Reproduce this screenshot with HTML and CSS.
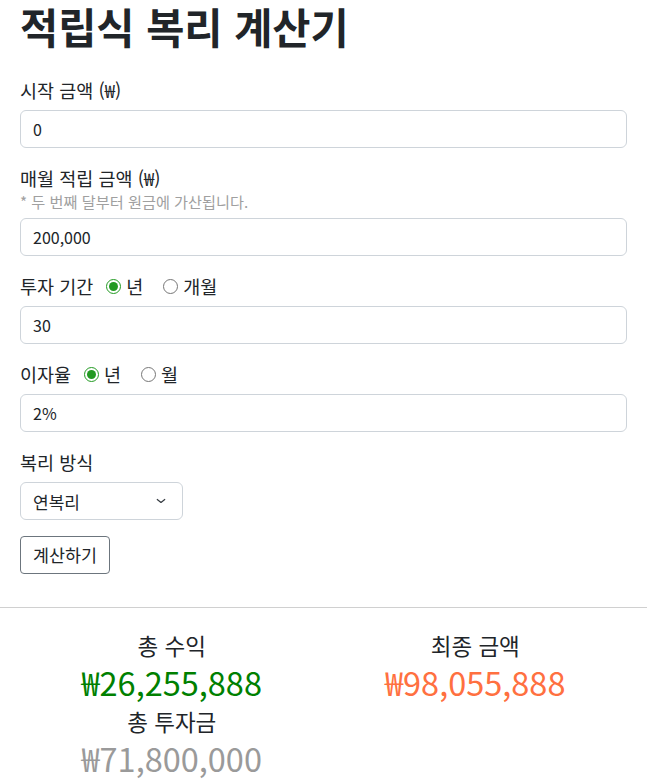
FILE: index.html
```html
<!DOCTYPE html>
<html lang="ko">
<head>
  <meta charset="UTF-8">
  <title>적립식 복리 계산기</title>
  <link rel="stylesheet" href="styles.css">
</head>
<body>
  <div class="container">
    <h1>적립식 복리 계산기</h1>
    <form id="calcForm">
      <div class="group">
        <label class="label" for="start">시작 금액 (₩)</label>
        <input type="text" id="start" class="field" value="0" />
      </div>

      <div class="group">
        <label class="label tight" for="monthly">매월 적립 금액 (₩)</label>
        <div class="hint">* 두 번째 달부터 원금에 가산됩니다.</div>
        <input type="text" id="monthly" class="field" value="200,000" />
      </div>

      <div class="group">
        <div class="label row">
          <span>투자 기간</span>
          <label class="opt"><input type="radio" name="period" checked />년</label>
          <label class="opt"><input type="radio" name="period" />개월</label>
        </div>
        <input type="text" id="period" class="field" value="30" />
      </div>

      <div class="group">
        <div class="label row">
          <span>이자율</span>
          <label class="opt"><input type="radio" name="rate" checked />년</label>
          <label class="opt"><input type="radio" name="rate" />월</label>
        </div>
        <input type="text" id="rate" class="field" value="2%" />
      </div>

      <div class="group">
        <label class="label" for="type">복리 방식</label>
        <select id="type" class="select">
          <option>연복리</option>
          <option>월복리</option>
        </select>
      </div>

      <button type="submit" class="btn">계산하기</button>
    </form>
  </div>

  <hr class="divider" />

  <div class="results">
    <div class="col">
      <div class="res-label">총 수익</div>
      <div class="res-value profit">₩26,255,888</div>
      <div class="res-label">총 투자금</div>
      <div class="res-value invested">₩71,800,000</div>
    </div>
    <div class="col">
      <div class="res-label">최종 금액</div>
      <div class="res-value final">₩98,055,888</div>
    </div>
  </div>
</body>
</html>
```

FILE: styles.css
```css
body { margin: 0; font-family: "Noto Sans CJK KR", "Noto Sans", sans-serif; color: #212529; background: #fff; font-size: 16px; line-height: 1.5; }
.container { padding: 0 20px; }
h1 { font-size: 41.5px; font-weight: 700; line-height: 49px; margin: 0 0 26px; padding-top: 2px; }
.group { margin-bottom: 17px; }
.label { display: block; font-size: 18.5px; line-height: 26px; margin-bottom: 7px; }
.label.tight { margin-bottom: 0; }
.row { display: flex; align-items: center; }
.row span { margin-right: 13px; }
.opt { display: flex; align-items: center; margin-right: 20px; }
.opt input { margin: 0 5px 0 0; width: 15px; height: 15px; accent-color: #229a22; }
.hint { font-size: 15.2px; line-height: 20px; color: #a0a0a0; margin-bottom: 7px; }
.field, .select { display: block; width: 100%; box-sizing: border-box; height: 38px; padding: 6px 12px; font: inherit; color: #212529; border: 1px solid #ced4da; border-radius: 6px; background: #fff; }
.select { width: 163px; font-size: 17px; appearance: none; background: #fff url("data:image/svg+xml,%3csvg xmlns='http://www.w3.org/2000/svg' viewBox='0 0 16 16'%3e%3cpath fill='none' stroke='%23343a40' stroke-linecap='round' stroke-linejoin='round' stroke-width='1.6' d='m3 6 5 4 5-4'/%3e%3c/svg%3e") no-repeat right 14px center / 14px 12px; }
.btn { font: inherit; font-size: 17.4px; color: #212529; background: #fff; border: 1px solid #6c757d; border-radius: 4px; padding: 0 12px; height: 38px; display: block; margin-top: -1px; }
.divider { border: 0; border-top: 1px solid #d0d0d0; margin: 33px 0 0; }
.results { display: grid; grid-template-columns: 1fr 1fr; padding: 21px 20px 0; text-align: center; }
.res-label { font-size: 22.5px; line-height: 32px; }
.res-value { font-size: 32.5px; line-height: 41px; margin-bottom: 3px; }
.profit { color: #008000; }
.final { color: #ff7040; }
.invested { color: #9a9a9a; }
```
